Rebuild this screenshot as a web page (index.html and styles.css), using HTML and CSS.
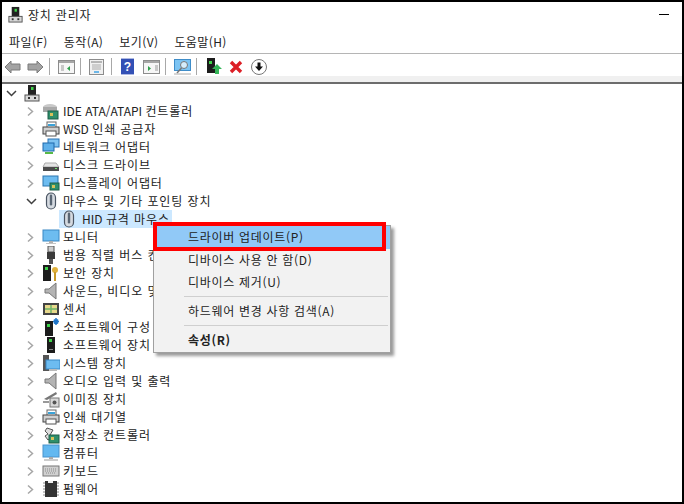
FILE: index.html
```html
<!DOCTYPE html>
<html lang="ko">
<head>
<meta charset="utf-8">
<title>장치 관리자</title>
<link rel="stylesheet" href="styles.css">
</head>
<body>
<svg class="defs" width="0" height="0">
  <defs>
    <symbol id="pc" viewBox="0 0 18 18"><rect x="5" y="1" width="8" height="11" fill="#222"/><rect x="8" y="3" width="2.5" height="3" fill="#3fd24a"/><rect x="2" y="11" width="14" height="6" fill="#d8d8d8" stroke="#555"/><rect x="5" y="13" width="2" height="2" fill="#333"/><rect x="11" y="13" width="2" height="2" fill="#333"/></symbol>
    <symbol id="tower" viewBox="0 0 18 18"><rect x="5" y="1" width="8" height="16" fill="#1c1c1c"/><rect x="7" y="3" width="3" height="3" fill="#3fd24a"/><rect x="7" y="13" width="4" height="1" fill="#888"/></symbol>
    <symbol id="ide" viewBox="0 0 18 18"><ellipse cx="8" cy="5" rx="7" ry="3" fill="#c8c8c8"/><rect x="1" y="5" width="14" height="5" fill="#a9a9a9"/><rect x="6" y="9" width="10" height="8" fill="#2f8f6b" stroke="#1d5f48"/><rect x="8" y="11" width="3" height="3" fill="#d8c25a"/></symbol>
    <symbol id="printer" viewBox="0 0 18 18"><rect x="5" y="2" width="9" height="6" fill="#fff" stroke="#666"/><rect x="6" y="4" width="7" height="2" fill="#3aa3d9"/><rect x="1" y="7" width="16" height="7" fill="#d0d0d0" stroke="#444"/><rect x="4" y="11" width="10" height="5" fill="#fff" stroke="#555"/></symbol>
    <symbol id="net" viewBox="0 0 18 18"><rect x="6" y="1" width="11" height="8" fill="#7fc3f1" stroke="#2a74b5"/><rect x="1" y="5" width="11" height="8" fill="#5fb0ea" stroke="#1f69ab"/><rect x="3" y="14" width="8" height="2" fill="#58b947"/></symbol>
    <symbol id="disk" viewBox="0 0 18 18"><path d="M3 7h11l3 4H1z" fill="#e4e4e4" stroke="#aaa"/><rect x="1" y="11" width="16" height="4" fill="#4c4c4c"/><rect x="13" y="12" width="2" height="1" fill="#6fe06f"/></symbol>
    <symbol id="display" viewBox="0 0 18 18"><rect x="1" y="2" width="15" height="10" fill="#6dbcf0" stroke="#2d76b0"/><rect x="8" y="9" width="9" height="7" fill="#2f8f6b" stroke="#1d5f48"/><rect x="10" y="11" width="3" height="3" fill="#d8c25a"/></symbol>
    <symbol id="mouse" viewBox="0 0 18 18"><rect x="4.500" y="1" width="9" height="16" rx="4.500" fill="#d5dae0" stroke="#4a5563" stroke-width="1.200"/><rect x="7.800" y="2.500" width="2.400" height="11" rx="1.200" fill="#5a6674"/></symbol>
    <symbol id="monitor" viewBox="0 0 18 18"><rect x="1" y="2" width="16" height="11" fill="#6dbcf0" stroke="#3b88c4"/><rect x="7" y="13" width="4" height="2" fill="#b0b0b0"/><rect x="4" y="15" width="10" height="1" fill="#c4c4c4"/></symbol>
    <symbol id="usb" viewBox="0 0 18 18"><rect x="6" y="0" width="6" height="6" fill="#ccc" stroke="#555"/><rect x="5" y="6" width="8" height="7" fill="#3a3a3a"/><rect x="7" y="13" width="4" height="5" fill="#555"/></symbol>
    <symbol id="security" viewBox="0 0 18 18"><rect x="1" y="1" width="8" height="16" fill="#1c1c1c"/><rect x="3" y="3" width="3" height="3" fill="#3fd24a"/><circle cx="13" cy="6" r="3" fill="#e0b13c"/><rect x="12" y="8" width="2" height="9" fill="#c99a28"/></symbol>
    <symbol id="speaker" viewBox="0 0 18 18"><path d="M3 7h4l7-6v16l-7-6H3z" fill="#b4b4b4" stroke="#777"/></symbol>
    <symbol id="sensor" viewBox="0 0 18 18"><rect x="1" y="3" width="16" height="12" fill="#444"/><rect x="3" y="5" width="12" height="8" fill="#e7d98c"/><path d="M3 9h12M9 5v8" stroke="#6fb56a" stroke-width="1.500"/></symbol>
    <symbol id="config" viewBox="0 0 18 18"><rect x="3" y="3" width="8" height="15" fill="#1c1c1c"/><rect x="5" y="6" width="3" height="3" fill="#3fd24a"/><path d="M14 0v7M11 3.500h6M12 1.500l4 4M16 1.500l-4 4" stroke="#1e74c8" stroke-width="1.500"/></symbol>
    <symbol id="system" viewBox="0 0 18 18"><rect x="1" y="1" width="6" height="16" fill="#555"/><rect x="4" y="6" width="14" height="9" fill="#6dbcf0" stroke="#3b88c4"/><rect x="7" y="15" width="8" height="2" fill="#bbb"/></symbol>
    <symbol id="camera" viewBox="0 0 18 18"><path d="M2 9L14 2l1 2L5 10z" fill="#777"/><rect x="8" y="8" width="9" height="9" fill="#d8d8d8" stroke="#777"/><circle cx="12.500" cy="12.500" r="2" fill="#555"/><rect x="1" y="11" width="6" height="2" fill="#999"/></symbol>
    <symbol id="storage" viewBox="0 0 18 18"><path d="M5 2l6 2-3 5 3 2-5 3-3-4 3-2-3-3z" fill="#ddd" stroke="#555"/><rect x="7" y="9" width="10" height="8" fill="#2f8f6b" stroke="#1d5f48"/><rect x="9" y="11" width="3" height="3" fill="#d8c25a"/></symbol>
    <symbol id="computer" viewBox="0 0 18 18"><rect x="1" y="1" width="16" height="12" fill="#63b8f0" stroke="#4a93cc"/><rect x="7" y="13" width="4" height="2" fill="#aaa"/><rect x="2" y="15" width="14" height="2" fill="#ccc"/></symbol>
    <symbol id="keyboard" viewBox="0 0 18 18"><rect x="1" y="4" width="16" height="10" fill="#d0d0d0" stroke="#777"/><path d="M3 7h12M3 9h12M4 11h10" stroke="#8b8b8b" stroke-dasharray="1 1"/></symbol>
    <symbol id="firmware" viewBox="0 0 18 18"><rect x="3" y="1" width="12" height="16" fill="#333"/><path d="M1 3h2M1 6h2M1 9h2M1 12h2M1 15h2M15 3h2M15 6h2M15 9h2M15 12h2M15 15h2" stroke="#888"/><rect x="6" y="1" width="5" height="2" fill="#eee"/></symbol>
    <symbol id="chev-r" viewBox="0 0 9 11"><path d="M2 1.500L6.500 5.500 2 9.500" fill="none" stroke="#a6a6a6" stroke-width="1.500"/></symbol>
    <symbol id="chev-d" viewBox="0 0 11 9"><path d="M1 2l4.500 4.500L10 2" fill="none" stroke="#404040" stroke-width="1.500"/></symbol>
  </defs>
</svg>

<div class="window">
  <header class="titlebar">
    <svg class="title-icon"><use href="#pc"/></svg>
    <span class="title-text">장치 관리자</span>
    <span class="minimize"></span>
  </header>

  <nav class="menubar">
    <span>파일(F)</span><span>동작(A)</span><span>보기(V)</span><span>도움말(H)</span>
  </nav>

  <div class="toolbar">
    <svg class="tool arrow" viewBox="0 0 17 14"><path d="M1 7l6-6v3h9v6H7v3z" fill="#a3a3a3" stroke="#7b7b7b"/></svg>
    <svg class="tool" viewBox="0 0 17 14"><path d="M16 7l-6-6v3H1v6h9v3z" fill="#a3a3a3" stroke="#7b7b7b"/></svg>
    <i class="sep"></i>
    <svg class="tool" viewBox="0 0 17 14"><rect x=".5" y=".5" width="16" height="13" fill="#f6f6f6" stroke="#8c8c8c"/><rect x="1" y="1" width="15" height="2" fill="#a6a6a6"/><path d="M3 6h3M3 8h3M3 10h3" stroke="#999"/><path d="M12 6v5l-3-2.500z" fill="#2e9e4a"/></svg>
    <i class="sep"></i>
    <svg class="tool doc" viewBox="0 0 15 16"><rect x=".5" y=".5" width="14" height="15" fill="#f0f0f0" stroke="#8c8c8c"/><rect x="2" y="2" width="11" height="2" fill="#b5b5b5"/><path d="M3 6h9M3 8h9M3 10h9" stroke="#aaa"/><rect x="5" y="12" width="5" height="2" fill="#6db7e8"/></svg>
    <i class="sep"></i>
    <svg class="tool help" viewBox="0 0 14 17"><rect width="14" height="17" fill="#3350b5"/><text x="7" y="13" class="help-mark">?</text></svg>
    <svg class="tool" viewBox="0 0 17 14"><rect x=".5" y=".5" width="16" height="13" fill="#f6f6f6" stroke="#8c8c8c"/><rect x="1" y="1" width="15" height="2" fill="#a6a6a6"/><path d="M12 6h3M12 8h3M12 10h3" stroke="#999"/><path d="M5 6v5l3-2.500z" fill="#2e9e4a"/></svg>
    <i class="sep"></i>
    <svg class="tool scan" viewBox="0 0 17 16"><rect x=".5" y=".5" width="16" height="11" fill="#7cc4f3" stroke="#3f8dc9"/><circle cx="10" cy="6" r="3.500" fill="#d5edfb" stroke="#777"/><path d="M7.500 9L3 14" stroke="#777" stroke-width="1.500"/><path d="M0 15h17" stroke="#aaa"/></svg>
    <i class="sep"></i>
    <svg class="tool driver" viewBox="0 0 16 17"><rect x="1" y="0" width="8" height="15" fill="#1c1c1c"/><rect x="3" y="3" width="3" height="3" fill="#3fd24a"/><path d="M11 6l5 5h-3v5H9v-5H6z" fill="#35b558"/></svg>
    <svg class="tool remove" viewBox="0 0 14 14"><path d="M2 2l10 10M12 2L2 12" stroke="#dc1f26" stroke-width="3.400"/></svg>
    <svg class="tool down" viewBox="0 0 16 16"><circle cx="8" cy="8" r="7.500" fill="#fff" stroke="#777"/><path d="M6.500 3.500h3v4H12L8 12 4 7.500h2.500z" fill="#111"/></svg>
  </div>
  <div class="toolbar-foot"></div>

  <main class="tree">
    <div class="row root">
      <svg class="chev-down"><use href="#chev-d"/></svg>
      <svg class="icon"><use href="#pc"/></svg>
    </div>
    <div class="row"><svg class="chev"><use href="#chev-r"/></svg><svg class="icon"><use href="#ide"/></svg><span class="label"><span class="lat">IDE ATA/ATAPI </span>컨트롤러</span></div>
    <div class="row"><svg class="chev"><use href="#chev-r"/></svg><svg class="icon"><use href="#printer"/></svg><span class="label"><span class="lat">WSD </span>인쇄 공급자</span></div>
    <div class="row"><svg class="chev"><use href="#chev-r"/></svg><svg class="icon"><use href="#net"/></svg><span class="label">네트워크 어댑터</span></div>
    <div class="row"><svg class="chev"><use href="#chev-r"/></svg><svg class="icon"><use href="#disk"/></svg><span class="label">디스크 드라이브</span></div>
    <div class="row"><svg class="chev"><use href="#chev-r"/></svg><svg class="icon"><use href="#display"/></svg><span class="label">디스플레이 어댑터</span></div>
    <div class="row"><svg class="chev-down"><use href="#chev-d"/></svg><svg class="icon"><use href="#mouse"/></svg><span class="label">마우스 및 기타 포인팅 장치</span></div>
    <div class="row child"><div class="selected"><svg class="icon"><use href="#mouse"/></svg><span class="label"><span class="lat">HID </span>규격 마우스</span></div></div>
    <div class="row"><svg class="chev"><use href="#chev-r"/></svg><svg class="icon"><use href="#monitor"/></svg><span class="label">모니터</span></div>
    <div class="row"><svg class="chev"><use href="#chev-r"/></svg><svg class="icon"><use href="#usb"/></svg><span class="label under-menu">범용 직렬 버스 컨트롤러</span></div>
    <div class="row"><svg class="chev"><use href="#chev-r"/></svg><svg class="icon"><use href="#security"/></svg><span class="label">보안 장치</span></div>
    <div class="row"><svg class="chev"><use href="#chev-r"/></svg><svg class="icon"><use href="#speaker"/></svg><span class="label under-menu">사운드, 비디오 및 게임 컨트롤러</span></div>
    <div class="row"><svg class="chev"><use href="#chev-r"/></svg><svg class="icon"><use href="#sensor"/></svg><span class="label">센서</span></div>
    <div class="row"><svg class="chev"><use href="#chev-r"/></svg><svg class="icon"><use href="#config"/></svg><span class="label under-menu">소프트웨어 구성 요소</span></div>
    <div class="row"><svg class="chev"><use href="#chev-r"/></svg><svg class="icon"><use href="#tower"/></svg><span class="label">소프트웨어 장치</span></div>
    <div class="row"><svg class="chev"><use href="#chev-r"/></svg><svg class="icon"><use href="#system"/></svg><span class="label">시스템 장치</span></div>
    <div class="row"><svg class="chev"><use href="#chev-r"/></svg><svg class="icon"><use href="#speaker"/></svg><span class="label">오디오 입력 및 출력</span></div>
    <div class="row"><svg class="chev"><use href="#chev-r"/></svg><svg class="icon"><use href="#camera"/></svg><span class="label">이미징 장치</span></div>
    <div class="row"><svg class="chev"><use href="#chev-r"/></svg><svg class="icon"><use href="#printer"/></svg><span class="label">인쇄 대기열</span></div>
    <div class="row"><svg class="chev"><use href="#chev-r"/></svg><svg class="icon"><use href="#storage"/></svg><span class="label">저장소 컨트롤러</span></div>
    <div class="row"><svg class="chev"><use href="#chev-r"/></svg><svg class="icon"><use href="#computer"/></svg><span class="label">컴퓨터</span></div>
    <div class="row"><svg class="chev"><use href="#chev-r"/></svg><svg class="icon"><use href="#keyboard"/></svg><span class="label">키보드</span></div>
    <div class="row"><svg class="chev"><use href="#chev-r"/></svg><svg class="icon"><use href="#firmware"/></svg><span class="label">펌웨어</span></div>
  </main>

  <div class="context-menu">
    <div class="item active">드라이버 업데이트(P)</div>
    <div class="item">디바이스 사용 안 함(D)</div>
    <div class="item">디바이스 제거(U)</div>
    <hr>
    <div class="item">하드웨어 변경 사항 검색(A)</div>
    <hr>
    <div class="item bold">속성(R)</div>
  </div>
  <div class="red-box"></div>
</div>
</body>
</html>
```

FILE: styles.css
```css
* { box-sizing: border-box; }
html, body { margin: 0; padding: 0; height: 100%; }
body {
  width: 684px;
  height: 504px;
  overflow: hidden;
  background: #fff;
  font-family: "Noto Sans CJK KR", "Noto Sans", sans-serif;
  font-size: 12px;
  color: #222;
}
.defs { position: absolute; }
.window {
  position: relative;
  width: 684px;
  height: 504px;
  border: 2px solid #000;
  overflow: hidden;
  background: #fff;
  display: flex;
  flex-direction: column;
}
.titlebar {
  height: 27px;
  display: flex;
  align-items: center;
  padding: 0 0 2px 5px;
  flex: none;
}
.title-icon { width: 17px; height: 17px; }
.title-text { margin-left: 4px; color: #222; letter-spacing: 0.8px; }
.minimize {
  width: 10px;
  height: 1px;
  background: #000;
  margin-left: auto;
  margin-right: 13px;
}
.menubar {
  height: 25px;
  display: flex;
  align-items: center;
  gap: 16px;
  padding-left: 7px;
  letter-spacing: 0.4px;
  border-bottom: 1px solid #b5b5b5;
  flex: none;
}
.toolbar {
  height: 22px;
  display: flex;
  align-items: center;
  padding: 3px 0 0 2px;
  flex: none;
}
.tool { width: 17px; height: 14px; margin-right: 5px; flex: none; }
.arrow { margin-right: 6px; }
.doc { width: 15px; height: 16px; margin-right: 7px; }
.help { width: 13px; height: 17px; margin-left: 1px; margin-right: 9px; }
.scan { height: 16px; }
.driver { width: 16px; height: 17px; margin-left: 1px; margin-right: 7px; }
.remove { width: 14px; height: 14px; margin-right: 8px; }
.down { width: 16px; height: 16px; }
.help-mark { fill: #fff; font: bold 13px "Liberation Sans", sans-serif; text-anchor: middle; }
.sep { width: 1px; height: 17px; background: #a8a8a8; margin-right: 8px; flex: none; }
.toolbar-foot {
  height: 8px;
  flex: none;
  background: #f0f0f0;
  border-bottom: 2px solid #6c6c6c;
}
.tree { flex: 1; overflow: hidden; }
.row {
  height: 18px;
  display: flex;
  align-items: center;
  padding-left: 24px;
  white-space: nowrap;
  color: #222;
  letter-spacing: 0.9px;
}
.label { margin-bottom: 2px; }
.lat { letter-spacing: 0; }
.under-menu {
  display: block;
  width: 100px;
  overflow: hidden;
}
.row .icon { width: 18px; height: 18px; margin: 0 3px 0 7px; flex: none; }
.chev { width: 9px; height: 11px; flex: none; }
.chev-down { width: 11px; height: 9px; flex: none; }
.row .chev-down + .icon { margin-left: 5px; }
.root { padding-left: 4px; }
.root .chev-down + .icon { margin-left: 6px; }
.child { padding-left: 57px; }
.selected {
  display: flex;
  align-items: center;
  height: 18px;
  background: #cce8ff;
  padding-right: 2px;
}
.row .selected .icon { margin: 0 4px 0 1px; }
.context-menu {
  position: absolute;
  left: 151px;
  top: 223px;
  width: 238px;
  height: 128px;
  background: #f2f2f2;
  border: 1px solid #a0a0a0;
  box-shadow: 3px 3px 3px rgba(0, 0, 0, 0.4);
  letter-spacing: 0.7px;
}
.item {
  height: 22px;
  line-height: 22px;
  padding-left: 34px;
  white-space: nowrap;
  color: #222;
}
.item.active { height: 23px; background: #91c9f7; }
.bold { font-weight: 700; }
.context-menu hr {
  margin: 3px 2px 3px 30px;
  border: 0;
  height: 1px;
  background: #cfcfcf;
}
.red-box {
  position: absolute;
  left: 151px;
  top: 220px;
  width: 233px;
  height: 29px;
  border: 4px solid #f00;
}
```
